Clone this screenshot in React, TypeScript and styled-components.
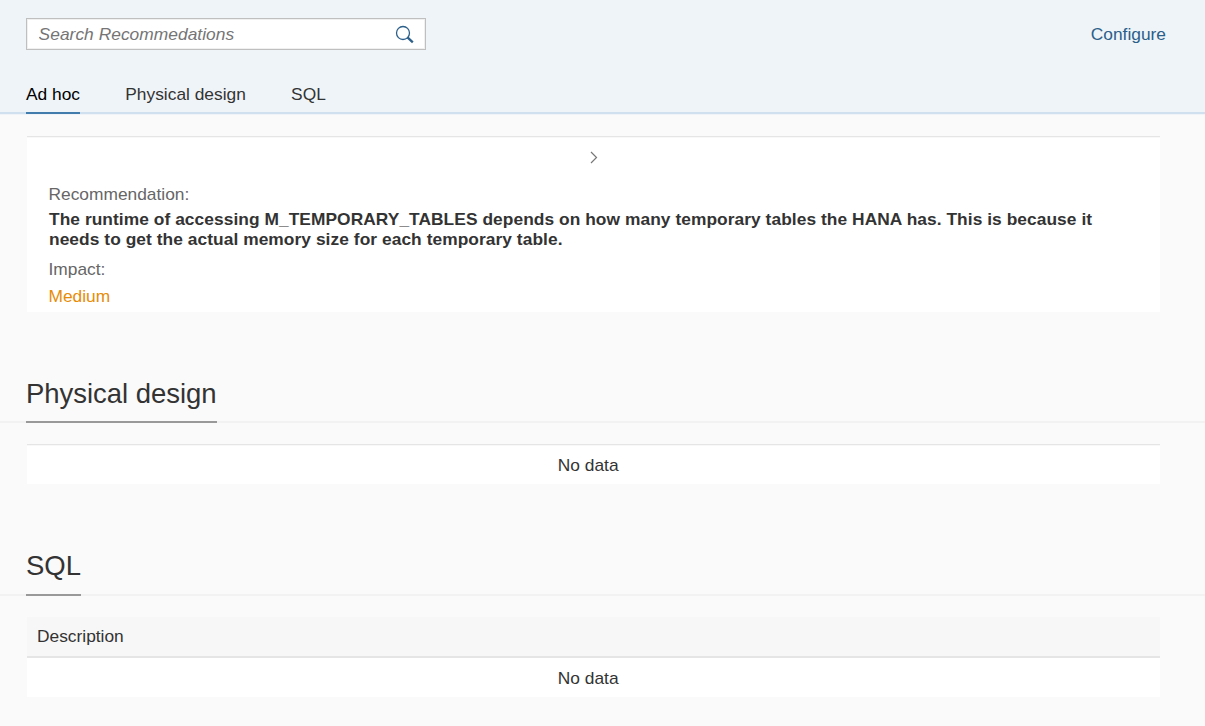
import React from 'react';
import styled, { createGlobalStyle } from 'styled-components';

const GlobalStyle = createGlobalStyle`
  *, *::before, *::after { box-sizing: border-box; }
  body {
    margin: 0;
    background: #fafafa;
    color: #333;
    font-family: "Liberation Sans", Arial, sans-serif;
    font-size: 17.35px;
    line-height: 20px;
  }
`;

const Page = styled.div`
  min-height: 726px;
  overflow: hidden;
`;

const Header = styled.header`
  height: 115px;
  background: #eff4f8;
  border-bottom: 1px solid #f0f4f8;
`;

const Toolbar = styled.div`
  display: flex;
  justify-content: space-between;
  align-items: center;
  padding: 18px 39px 0 26px;
`;

const SearchBox = styled.label`
  display: flex;
  align-items: center;
  width: 400px;
  height: 32px;
  padding: 1px 10px 0 11.6px;
  background: #fff;
  border: 1px solid #bfbfbf;
  box-shadow: inset 0 0 0 1px #f0f0f0;
`;

const SearchInput = styled.input`
  flex: 1;
  min-width: 0;
  height: 20px;
  margin-bottom: 1px;
  padding: 0;
  border: 0;
  outline: 0;
  background: transparent;
  font: inherit;
  letter-spacing: 0.04px;
  color: #333;
  &::placeholder {
    color: #757575;
    font-style: italic;
    opacity: 1;
  }
`;

const ConfigureLink = styled.a`
  color: #2c5f8a;
  text-decoration: none;
`;

const Tabs = styled.nav`
  display: flex;
  gap: 45.3px;
  height: 64px;
  padding: 0 26px;
  border-bottom: 2px solid #d1e0ee;
`;

const Tab = styled.a<{ $active?: boolean }>`
  height: 64px;
  padding-top: 34px;
  color: ${(p) => (p.$active ? '#000' : '#333')};
  border-bottom: 2px solid ${(p) => (p.$active ? '#427cac' : 'transparent')};
`;

const Panel = styled.section`
  margin: 0 45px 0 27px;
  background: #fff;
  border-top: 1px solid #e5e5e5;
  box-shadow: inset 0 1px 0 #f8f8f8;
`;

const AdHocPanel = styled(Panel)`
  height: 176px;
  margin-top: 21px;
  padding: 14px 22px 0 21.5px;
`;

const Expander = styled.div`
  display: flex;
  justify-content: center;
  height: 33px;
  padding-left: 1.5px;
`;

const FieldLabel = styled.div`
  color: #666;
`;

const Message = styled.p`
  margin: 5px 0 10px;
  padding: 0 30px 0 0.5px;
  font-weight: bold;
  font-size: 17.35px;
  letter-spacing: 0.06px;
`;

const Impact = styled.div`
  margin-top: 7px;
  color: #e78c07;
`;

const SectionTitle = styled.h2<{ $top: number; $gap: number }>`
  display: flex;
  height: ${(p) => 45 + p.$gap}px;
  margin: ${(p) => p.$top}px 0 0;
  padding: 0 26px;
  border-bottom: 2px solid #f2f2f2;
  font-size: 27.5px;
  font-weight: normal;
  line-height: 32px;
`;

const TitleText = styled.span`
  align-self: flex-start;
  height: calc(100% + 2px);
  border-bottom: 2px solid #999;
  letter-spacing: -0.03px;
`;

const EmptyPanel = styled(Panel)`
  height: 40px;
  margin-top: 21px;
`;

const EmptyRow = styled.div`
  padding: 10px 10.6px 0 0;
  text-align: center;
`;

const Table = styled.section`
  height: 80px;
  margin: 21px 45px 0 27px;
  background: #fff;
`;

const TableHead = styled.div`
  height: 41px;
  padding: 9px 10px;
  background: #f7f7f7;
  border-bottom: 2px solid #e5e5e5;
`;

const SearchIcon = () => (
  <svg width="20" height="20" viewBox="0 0 20 20" fill="none" stroke="#2c5f8a">
    <circle cx="8" cy="8" r="6.5" strokeWidth="1.3" />
    <path d="M12.5 12.3 17.8 17.4" strokeWidth="2.3" />
  </svg>
);

const Chevron = () => (
  <svg width="10" height="14" viewBox="0 0 10 14" fill="none" stroke="#777" strokeWidth="1.2">
    <path d="M2 1 7.5 6.5 2 12" />
  </svg>
);

export default function App() {
  return (
    <Page>
      <GlobalStyle />
      <Header>
        <Toolbar>
          <SearchBox>
            <SearchInput placeholder="Search Recommedations" />
            <SearchIcon />
          </SearchBox>
          <ConfigureLink>Configure</ConfigureLink>
        </Toolbar>
        <Tabs>
          <Tab $active>Ad hoc</Tab>
          <Tab>Physical design</Tab>
          <Tab>SQL</Tab>
        </Tabs>
      </Header>
      <AdHocPanel>
        <Expander><Chevron /></Expander>
        <FieldLabel>Recommendation:</FieldLabel>
        <Message>
          The runtime of accessing M_TEMPORARY_TABLES depends on how many temporary tables the HANA has. This is because it needs to get the actual memory size for each temporary table.
        </Message>
        <FieldLabel>Impact:</FieldLabel>
        <Impact>Medium</Impact>
      </AdHocPanel>
      <SectionTitle $top={66} $gap={0}><TitleText>Physical design</TitleText></SectionTitle>
      <EmptyPanel><EmptyRow>No data</EmptyRow></EmptyPanel>
      <SectionTitle $top={66} $gap={1}><TitleText>SQL</TitleText></SectionTitle>
      <Table>
        <TableHead>Description</TableHead>
        <EmptyRow>No data</EmptyRow>
      </Table>
    </Page>
  );
}
